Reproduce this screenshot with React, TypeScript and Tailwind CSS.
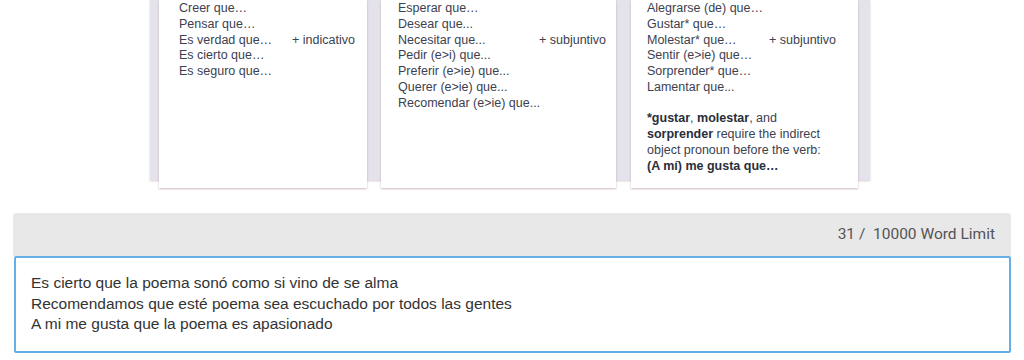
const card = "bg-white shadow-[0_1px_2px_rgba(150,100,120,0.45)] h-[188px] shrink-0";
const txt = "font-['Liberation_Sans',Arial,sans-serif] text-[12.5px] leading-[15.75px] text-[#3c4150]";

const indicative = ["Creer que…", "Pensar que…", "Es verdad que…", "Es cierto que…", "Es seguro que…"];
const wishes = [
  "Esperar que…",
  "Desear que...",
  "Necesitar que...",
  "Pedir (e>i) que...",
  "Preferir (e>ie) que...",
  "Querer (e>ie) que...",
  "Recomendar (e>ie) que...",
];
const emotions = [
  "Alegrarse (de) que…",
  "Gustar* que…",
  "Molestar* que…",
  "Sentir (e>ie) que…",
  "Sorprender* que…",
  "Lamentar que...",
];

const List = ({ items, width, label }: { items: string[]; width: string; label: string }) => (
  <div className="flex">
    <div className={`${width} shrink-0`}>
      {items.map((t) => (
        <div key={t} className="whitespace-nowrap">{t}</div>
      ))}
    </div>
    <div className="mt-[31.5px] whitespace-nowrap">{label}</div>
  </div>
);

export default function App() {
  return (
    <div className="bg-white w-[1024px] h-[360px] overflow-hidden">
      <div className="ml-[150px] w-[720px] h-[180px] bg-[#e4e3eb] shadow-[0_1px_2px_rgba(150,100,120,0.35)] flex pl-[9px] gap-[14px]">
        <div className={`${card} w-[208px] pl-[20px] pt-[1px] ${txt}`}>
          <List items={indicative} width="w-[113px]" label="+ indicativo" />
        </div>
        <div className={`${card} w-[235px] pl-[17px] pt-[1px] ${txt}`}>
          <List items={wishes} width="w-[141px]" label="+ subjuntivo" />
        </div>
        <div className={`${card} w-[227px] ml-px pl-[16px] pt-[1px] ${txt}`}>
          <List items={emotions} width="w-[122px]" label="+ subjuntivo" />
          <div className="mt-[15.75px] whitespace-nowrap">
            <b className="text-[#2a2e3a]">*gustar</b>, <b className="text-[#2a2e3a]">molestar</b>, and
            <br />
            <b className="text-[#2a2e3a]">sorprender</b> require the indirect
            <br />
            object pronoun before the verb:
            <br />
            <b className="text-[#2a2e3a]">(A mí) me gusta que…</b>
          </div>
        </div>
      </div>

      <div className="mx-[13px] mt-[33px]">
        <div className="h-[43px] bg-[#e8e8e8] rounded-t-[3px] flex items-center justify-end pr-[16px] font-['Roboto',sans-serif] text-[15.5px] text-[#555]">
          31 /&nbsp; 10000 Word Limit
        </div>
        <div className="ml-px border-2 border-[#66aee6] rounded-[2px] pt-[15px] pb-[16px] pl-[15px] font-['Liberation_Sans',Arial,sans-serif] text-[15.5px] leading-[20.5px] text-[#333]">
          <div>Es cierto que la poema sonó como si vino de se alma</div>
          <div>Recomendamos que esté poema sea escuchado por todos las gentes</div>
          <div>A mi me gusta que la poema es apasionado</div>
        </div>
      </div>
    </div>
  );
}
